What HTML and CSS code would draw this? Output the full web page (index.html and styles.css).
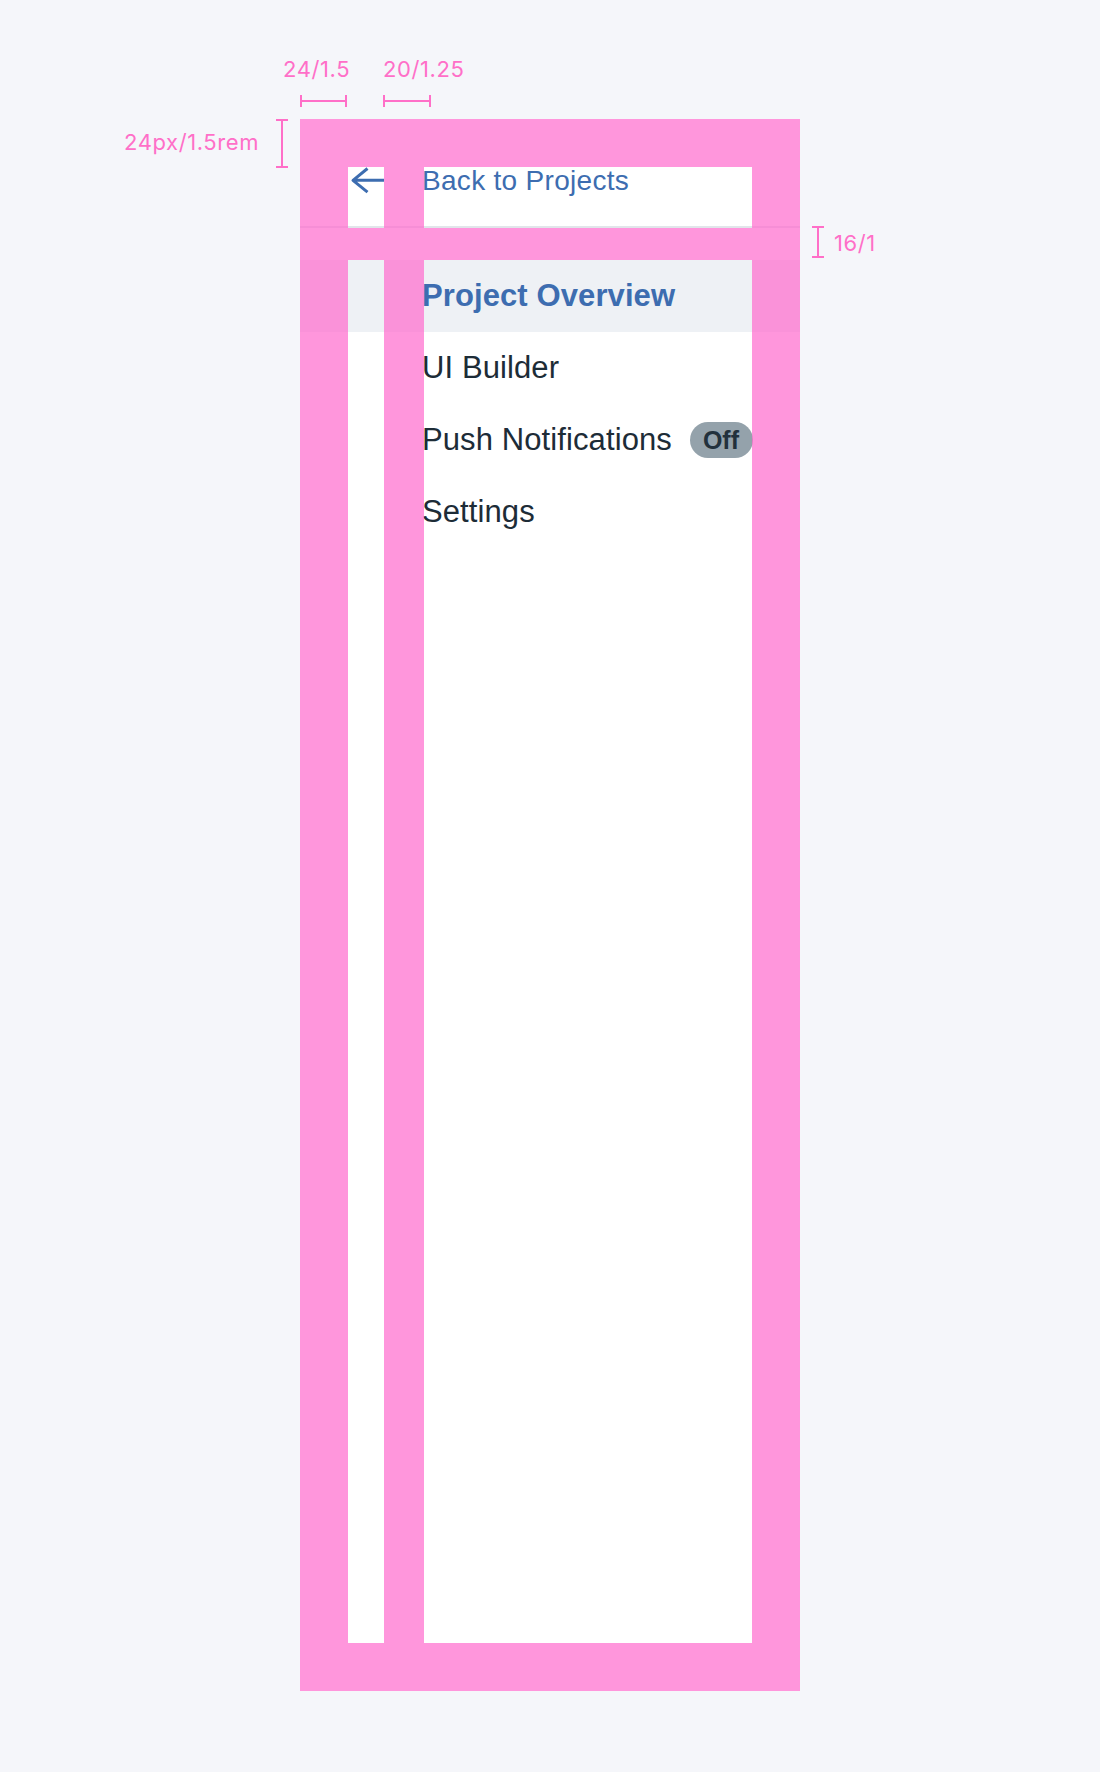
FILE: index.html
```html
<!DOCTYPE html>
<html lang="en">
<head>
<meta charset="utf-8">
<title>Sidebar spacing</title>
<link rel="stylesheet" href="styles.css">
</head>
<body>
<div class="canvas">
  <div class="panel-wrap">
    <aside class="panel">
      <header class="panel-header">
        <a class="back" href="#">
          <svg class="back-icon" viewBox="0 0 36 28" aria-hidden="true">
            <path d="M19.5 1.5 L5 13.3 L19.5 25.2 M5 13.3 H36" fill="none" stroke="#3d6db0" stroke-width="3" stroke-linejoin="round" stroke-linecap="butt"/>
          </svg>
          <span>Back to Projects</span>
        </a>
      </header>
      <nav class="nav">
        <a class="nav-item active" href="#">Project Overview</a>
        <a class="nav-item" href="#">UI Builder</a>
        <a class="nav-item" href="#"><span>Push Notifications</span><span class="badge">Off</span></a>
        <a class="nav-item" href="#">Settings</a>
      </nav>
      <div class="overlay" aria-hidden="true">
        <div class="ov ov-top"></div>
        <div class="ov ov-left"></div>
        <div class="ov ov-right"></div>
        <div class="ov ov-band"></div>
        <div class="ov ov-gap-a"></div>
        <div class="ov ov-gap-b"></div>
        <div class="ov ov-bottom"></div>
      </div>
    </aside>

    <span class="label l1">24/1.5</span>
    <span class="label l2">20/1.25</span>
    <div class="dim-h d1"></div>
    <div class="dim-h d2"></div>
    <span class="label l3">24px/1.5rem</span>
    <div class="dim-v d3"></div>
    <div class="dim-v d4"></div>
    <span class="label l4">16/1</span>
  </div>
</div>
</body>
</html>
```

FILE: styles.css
```css
* { box-sizing: border-box; }

html, body {
  margin: 0;
  padding: 0;
}

body {
  width: 1100px;
  height: 1772px;
  overflow: hidden;
  background: #f5f6fa;
  font-family: "Liberation Sans", Arial, sans-serif;
  font-variant-ligatures: none;
}

.canvas {
  padding: 119px 0 0 300px;
}

.panel-wrap {
  position: relative;
  width: 500px;
}

.panel {
  position: relative;
  width: 500px;
  height: 1572px;
  background: #ffffff;
}

/* header */
.panel-header {
  display: flex;
  padding: 48px 48px 31px;
  border-bottom: 2px solid #e1e5ea;
}

.back {
  display: flex;
  align-items: flex-start;
  color: #3d6db0;
  text-decoration: none;
  font-size: 28px;
  line-height: 28px;
  letter-spacing: 0.3px;
  white-space: nowrap;
}

.back-icon {
  display: block;
  flex: none;
  width: 36px;
  height: 28px;
  margin-right: 38px;
  overflow: visible;
}

/* nav list */
.nav {
  margin-top: 32px;
}

.nav-item {
  display: flex;
  align-items: center;
  height: 72px;
  padding: 0 46px 0 122px;
  font-size: 31px;
  letter-spacing: 0.1px;
  color: #1d2c37;
  text-decoration: none;
  white-space: nowrap;
}

.nav-item.active {
  background: #eef1f5;
  color: #3d6db0;
  font-weight: bold;
}

.badge {
  flex: none;
  display: inline-flex;
  align-items: center;
  height: 36px;
  margin-left: 18px;
  padding: 0 14px 0 13px;
  border-radius: 18px;
  background: #94a2ab;
  color: #22313c;
  font-size: 25px;
  font-weight: bold;
  letter-spacing: 0;
}

/* spacing overlay */
.overlay {
  position: absolute;
  inset: 0;
  display: grid;
  grid-template-columns: 48px 36px 40px 1fr 48px;
  grid-template-rows: 48px 61px 32px 1fr 48px;
  pointer-events: none;
}

.ov { background: rgba(255, 105, 205, 0.7); }
.ov-top    { grid-area: 1 / 1 / 2 / 6; }
.ov-bottom { grid-area: 5 / 1 / 6 / 6; }
.ov-left   { grid-area: 2 / 1 / 5 / 2; }
.ov-right  { grid-area: 2 / 5 / 5 / 6; }
.ov-band   { grid-area: 3 / 2 / 4 / 5; }
.ov-gap-a  { grid-area: 2 / 3 / 3 / 4; }
.ov-gap-b  { grid-area: 4 / 3 / 5 / 4; }

/* annotations */
.label {
  position: absolute;
  font-family: Inter, "Liberation Sans", sans-serif;
  font-size: 22px;
  line-height: 22px;
  letter-spacing: 0.6px;
  color: #ff6fc8;
  white-space: nowrap;
}

.l1 { left: -17px; top: -61px; }
.l2 { left: 83px;  top: -61px; }
.l3 { left: -176px; top: 12px; }
.l4 { left: 534px; top: 113px; }

.dim-h {
  position: absolute;
  top: -24px;
  height: 12px;
  border-left: 2px solid #ff6fc8;
  border-right: 2px solid #ff6fc8;
}
.dim-h::before {
  content: "";
  position: absolute;
  left: 0;
  right: 0;
  top: 5px;
  height: 2px;
  background: #ff6fc8;
}
.d1 { left: 0; width: 47px; }
.d2 { left: 83px; width: 48px; }

.dim-v {
  position: absolute;
  width: 12px;
  border-top: 2px solid #ff6fc8;
  border-bottom: 2px solid #ff6fc8;
}
.dim-v::before {
  content: "";
  position: absolute;
  top: 0;
  bottom: 0;
  left: 5px;
  width: 2px;
  background: #ff6fc8;
}
.d3 { left: -24px; top: 0; height: 49px; }
.d4 { left: 512px; top: 107px; height: 32px; }
```
